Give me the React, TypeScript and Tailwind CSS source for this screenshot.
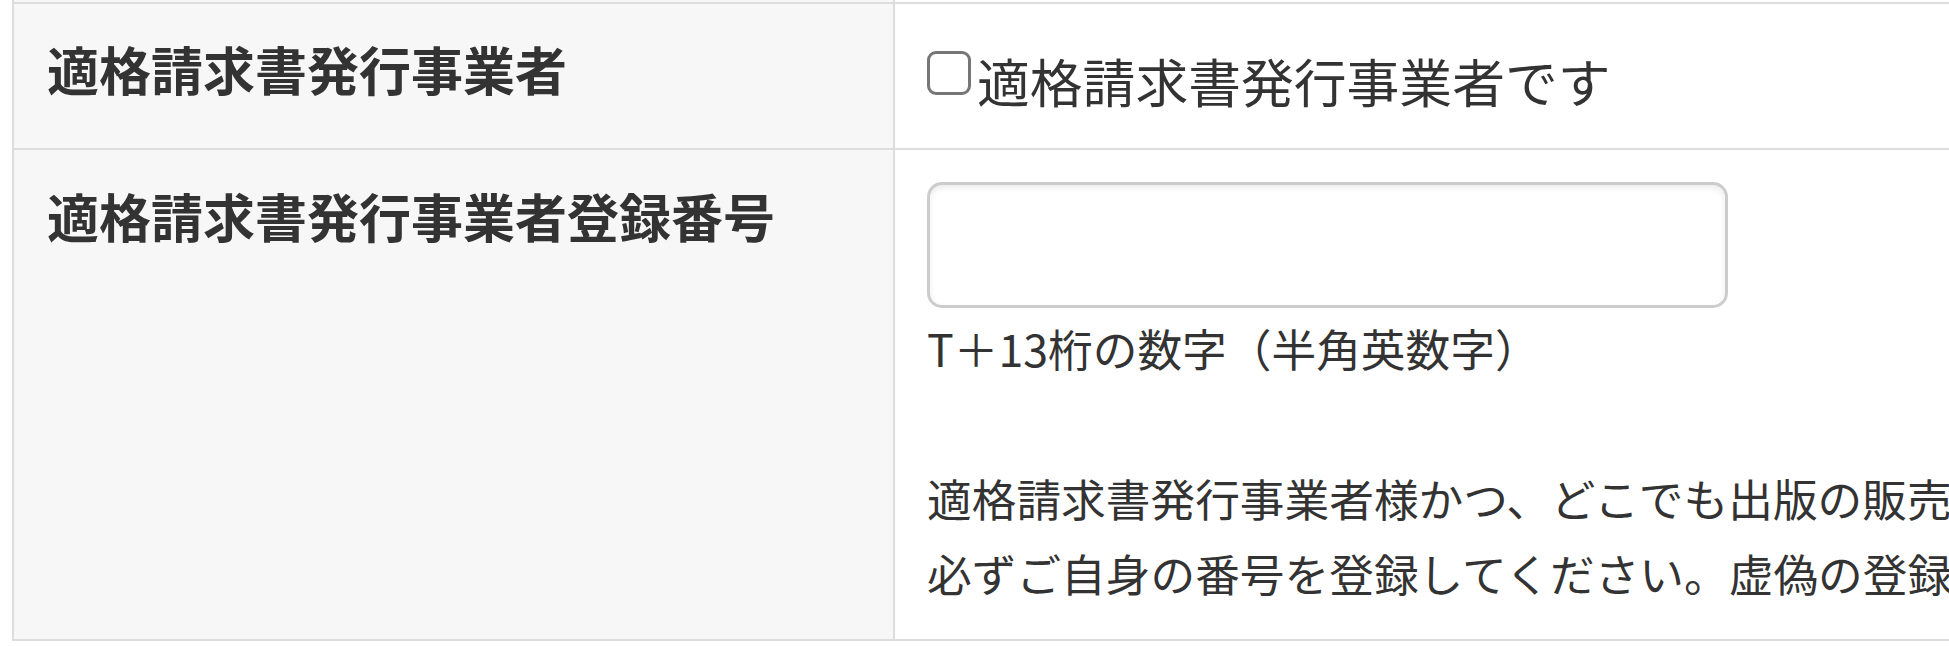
import React from 'react';

const FONT = '"Noto Sans CJK JP", "Noto Sans", sans-serif';

const Checkbox: React.FC = () => (
  <span className="mt-[15px] mr-[6px] inline-block h-[44px] w-[44px] shrink-0 rounded-[9px] border-[3px] border-[#767676] bg-white" />
);

const App: React.FC = () => {
  return (
    <div className="w-full overflow-hidden bg-white pl-3 text-[#333]" style={{ fontFamily: FONT }}>
      <div className="w-[2400px] border-l-2 border-[#ddd]">
        {/* tail of the previous row */}
        <div className="flex h-[2px]">
          <div className="w-[881px] border-r-2 border-[#ddd] bg-[#f7f7f7]" />
          <div className="flex-1 bg-white" />
        </div>

        {/* 適格請求書発行事業者 */}
        <div className="flex border-t-2 border-[#ddd]">
          <div className="w-[881px] shrink-0 border-r-2 border-[#ddd] bg-[#f7f7f7] pl-[33px] pt-[21px]">
            <p className="text-[52px] font-bold leading-[88px]">適格請求書発行事業者</p>
          </div>
          <div className="flex-1 pl-[32px] pt-[32px] pb-[24px]">
            <label className="flex items-start text-[52.8px] font-normal leading-[88px]">
              <Checkbox />
              <span>適格請求書発行事業者です</span>
            </label>
          </div>
        </div>

        {/* 登録番号 */}
        <div className="flex border-y-2 border-[#ddd]">
          <div className="w-[881px] shrink-0 border-r-2 border-[#ddd] bg-[#f7f7f7] pl-[33px] pt-[22px]">
            <p className="text-[52px] font-bold leading-[88px]">適格請求書発行事業者登録番号</p>
          </div>
          <div className="flex-1 pl-[32px] pt-[32px] pb-[29px]">
            <input
              type="text"
              className="block h-[126px] w-[801px] rounded-[15px] border-[3px] border-[#ccc] bg-white shadow-[inset_0_3px_6px_rgba(0,0,0,0.08)] outline-none"
            />
            <div className="mt-[2px] whitespace-nowrap text-[44.7px] font-normal leading-[75px]">
              <p>T＋13桁の数字（半角英数字）</p>
              <p>&nbsp;</p>
              <p>適格請求書発行事業者様かつ、どこでも出版の販売者様のみご登録ください。</p>
              <p>必ずご自身の番号を登録してください。虚偽の登録が判明した場合はお取引を停止いたします。</p>
            </div>
          </div>
        </div>
      </div>
    </div>
  );
};

export default App;
